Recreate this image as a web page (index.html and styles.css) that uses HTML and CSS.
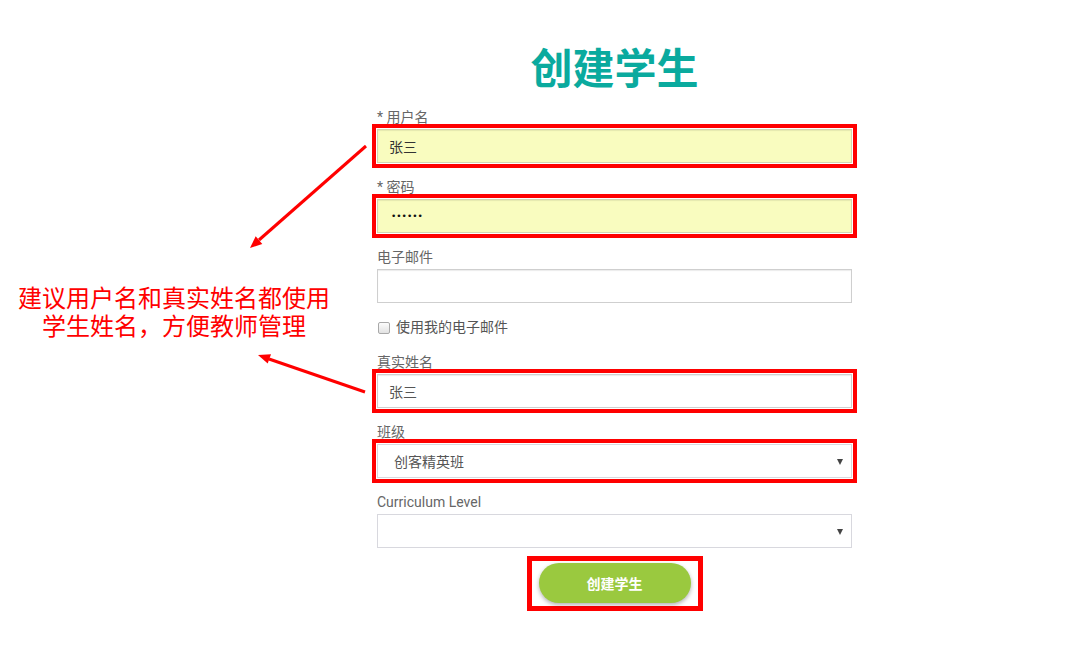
FILE: index.html
```html
<!DOCTYPE html>
<html lang="zh-CN">
<head>
<meta charset="utf-8">
<title>创建学生</title>
<link rel="stylesheet" href="styles.css">
</head>
<body>
<div class="page">
  <form class="form">
    <h1 class="title">创建学生</h1>
    <div class="field">
      <label class="label">* 用户名</label>
      <input class="input autofill hl" type="text" value="张三">
    </div>
    <div class="field">
      <label class="label">* 密码</label>
      <input class="input autofill hl pwd" type="password" value="123456">
    </div>
    <div class="field">
      <label class="label">电子邮件</label>
      <input class="input" type="text" value="">
    </div>
    <div class="check-row">
      <input class="check" type="checkbox">
      <span class="check-text">使用我的电子邮件</span>
    </div>
    <div class="field">
      <label class="label">真实姓名</label>
      <input class="input plain hl" type="text" value="张三">
    </div>
    <div class="field">
      <label class="label">班级</label>
      <div class="select-wrap hl">
        <select class="select"><option>创客精英班</option></select>
      </div>
    </div>
    <div class="field">
      <label class="label">Curriculum Level</label>
      <div class="select-wrap">
        <select class="select"><option></option></select>
      </div>
    </div>
    <div class="btn-row">
      <div class="btn-mark"><button class="btn" type="button">创建学生</button></div>
    </div>
  </form>
</div>
<div class="note">
  <div class="note-line">建议用户名和真实姓名都使用</div>
  <div class="note-line">学生姓名，方便教师管理</div>
</div>
<svg class="arrows" width="1086" height="653" viewBox="0 0 1086 653">
  <line x1="366" y1="146" x2="259" y2="240" stroke="#f00" stroke-width="3"/>
  <polygon points="250,248 262.3,243.9 255.7,236.3" fill="#f00"/>
  <line x1="365" y1="392" x2="269" y2="359" stroke="#f00" stroke-width="3"/>
  <polygon points="258,355 271,354.2 267.7,363.6" fill="#f00"/>
</svg>
</body>
</html>
```
FILE: styles.css
```css
html, body {
  margin: 0;
  padding: 0;
  background: #fff;
}
body {
  width: 1086px;
  height: 653px;
  position: relative;
  overflow: hidden;
  font-family: Roboto, "Noto Sans CJK SC", sans-serif;
}
.page {
  padding-top: 41px;
  padding-left: 377px;
}
.form {
  width: 475px;
  margin: 0;
}
.title {
  margin: 0 0 16px;
  text-align: center;
  font-size: 42px;
  line-height: 50px;
  font-weight: 700;
  color: #0aaa9e;
  font-family: "Noto Sans CJK SC", sans-serif;
}
.field {
  margin-bottom: 14px;
}
.label {
  display: block;
  font-size: 14px;
  line-height: 20px;
  margin-bottom: 2px;
  color: #666;
}
.input {
  display: block;
  width: 100%;
  box-sizing: border-box;
  height: 34px;
  margin: 0;
  padding: 0 11px;
  border: 1px solid #cfcfcf;
  background: #fff;
  font-family: "Noto Sans CJK SC", sans-serif;
  font-size: 14px;
  color: #333;
  box-shadow: inset 0 1px 1px rgba(0,0,0,.08);
}
.autofill {
  background: #f9fcbf;
  border-color: #d4d6b0;
}
.pwd {
  font-family: "DejaVu Sans", sans-serif;
  font-size: 9px;
  letter-spacing: 0;
  color: #111;
  padding-left: 13px;
}
.plain {
  color: #555;
}
.hl {
  outline: 4px solid #f00;
  outline-offset: 1px;
}
.check-row {
  display: flex;
  align-items: center;
  height: 21px;
  margin-bottom: 14px;
}
.check {
  appearance: none;
  -webkit-appearance: none;
  width: 12px;
  height: 12px;
  margin: 0 0 0 1px;
  border: 1px solid #a9a9a9;
  border-radius: 2px;
  background: linear-gradient(#fcfcfc, #e2e2e2);
}
.check-text {
  margin-left: 6px;
  font-size: 14px;
  line-height: 20px;
  color: #555;
  position: relative;
  top: -1px;
}
.select-wrap {
  position: relative;
}
.select-wrap::after {
  content: "";
  position: absolute;
  right: 9px;
  top: 15px;
  border-left: 3.5px solid transparent;
  border-right: 3.5px solid transparent;
  border-top: 6px solid #444;
}
.select {
  display: block;
  width: 100%;
  box-sizing: border-box;
  height: 34px;
  margin: 0;
  padding: 0 16px;
  appearance: none;
  -webkit-appearance: none;
  border: 1px solid #d8d8de;
  border-radius: 0;
  background: #fff;
  font-family: "Noto Sans CJK SC", sans-serif;
  font-size: 14px;
  color: #555;
}
.btn-row {
  margin-top: -6px;
  text-align: center;
}
.btn-mark {
  display: inline-block;
  border: 5px solid #f00;
  padding: 2px 7px 3px;
  line-height: 0;
}
.btn {
  width: 152px;
  height: 40px;
  border: 0;
  border-radius: 20px;
  background: #9ac93f;
  color: #fff;
  font-family: "Noto Sans CJK SC", sans-serif;
  font-size: 14px;
  font-weight: 700;
  box-shadow: 0 2px 4px rgba(0,0,0,.3);
}
.note {
  position: absolute;
  left: 0;
  top: 283px;
  width: 348px;
  text-align: center;
  font-family: "Noto Sans CJK SC", sans-serif;
  font-size: 24px;
  color: #f00;
}
.note-line {
  height: 28px;
  line-height: 28px;
}
.arrows {
  position: absolute;
  left: 0;
  top: 0;
  pointer-events: none;
}
```
